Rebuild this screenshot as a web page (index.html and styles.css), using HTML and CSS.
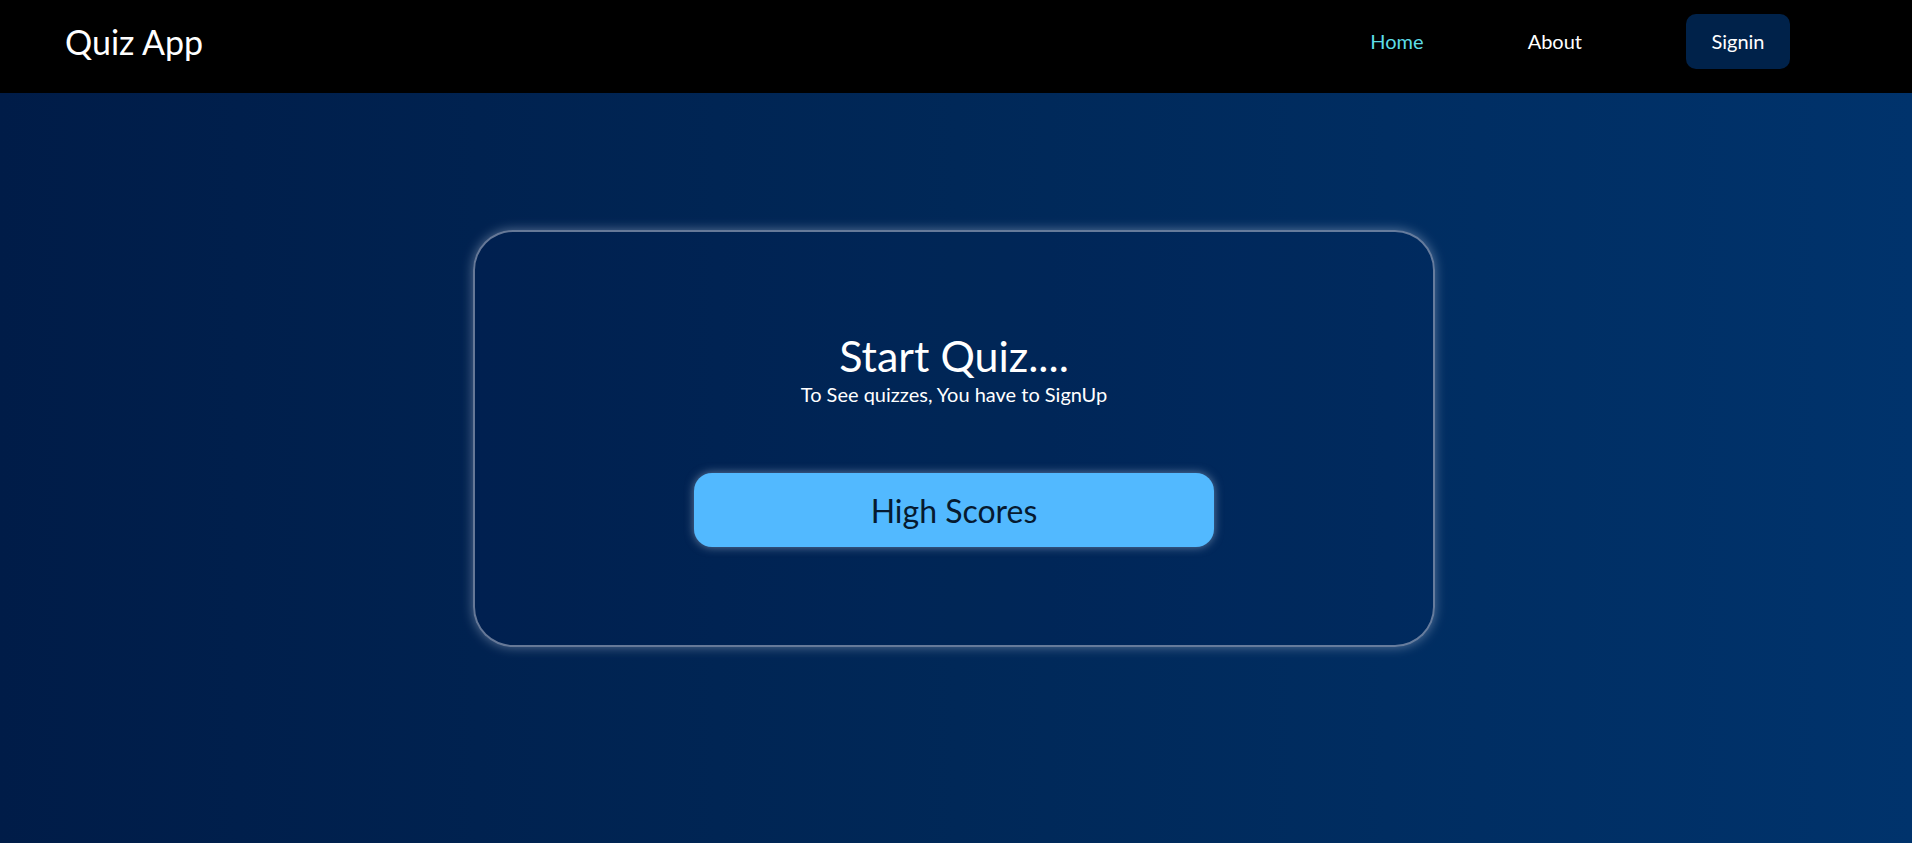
FILE: index.html
```html
<!DOCTYPE html>
<html lang="en">
<head>
<meta charset="utf-8">
<title>Quiz App</title>
<link rel="stylesheet" href="styles.css">
</head>
<body>
<header class="nav">
  <div class="brand">Quiz App</div>
  <nav class="links">
    <a class="link active" href="#">Home</a>
    <a class="link" href="#">About</a>
    <a class="signin" href="#">Signin</a>
  </nav>
</header>
<main class="main">
  <section class="card">
    <h1 class="title">Start Quiz....</h1>
    <p class="subtitle">To See quizzes, You have to SignUp</p>
    <button class="scores">High Scores</button>
  </section>
</main>
</body>
</html>
```

FILE: styles.css
```css
* { box-sizing: border-box; }
html, body { margin: 0; padding: 0; }
body {
  font-family: "Lato", "Noto Sans", sans-serif;
  height: 843px;
  background: linear-gradient(to right, #001c48 0%, #002858 50%, #00336c 100%);
  color: #fff;
  overflow: hidden;
}
.nav {
  height: 93px;
  background: #000;
  display: flex;
  align-items: center;
  justify-content: space-between;
  padding: 0 122px 11px 65px;
}
.brand {
  font-size: 34px;
  color: #fff;
}
.links {
  display: flex;
  align-items: center;
  gap: 104px;
}
.link {
  text-decoration: none;
  color: #fff;
  font-size: 20px;
}
.link.active { color: #5ddde8; }
.signin {
  text-decoration: none;
  color: #fff;
  font-size: 20px;
  background: #00224a;
  border-radius: 10px;
  width: 104px;
  height: 55px;
  display: flex;
  align-items: center;
  justify-content: center;
}
.main {
  display: flex;
  justify-content: center;
  padding-top: 137px;
  padding-right: 4px;
}
.card {
  width: 962px;
  height: 417px;
  border: 2px solid rgba(170, 180, 200, 0.6);
  border-radius: 40px;
  box-shadow: 0 0 12px rgba(200, 210, 230, 0.45);
  background: rgba(0, 30, 80, 0.15);
  display: flex;
  flex-direction: column;
  align-items: center;
  padding-top: 98px;
}
.title {
  margin: 0;
  font-weight: 400;
  font-size: 43px;
  line-height: 52px;
}
.subtitle {
  margin: 0;
  font-size: 20px;
  line-height: 24px;
}
.scores {
  margin-top: 67px;
  width: 520px;
  height: 74px;
  border: none;
  border-radius: 18px;
  background: #52b9ff;
  color: #061a30;
  font-family: inherit;
  font-size: 32px;
  box-shadow: 0 0 10px rgba(200, 215, 235, 0.5);
}
```
